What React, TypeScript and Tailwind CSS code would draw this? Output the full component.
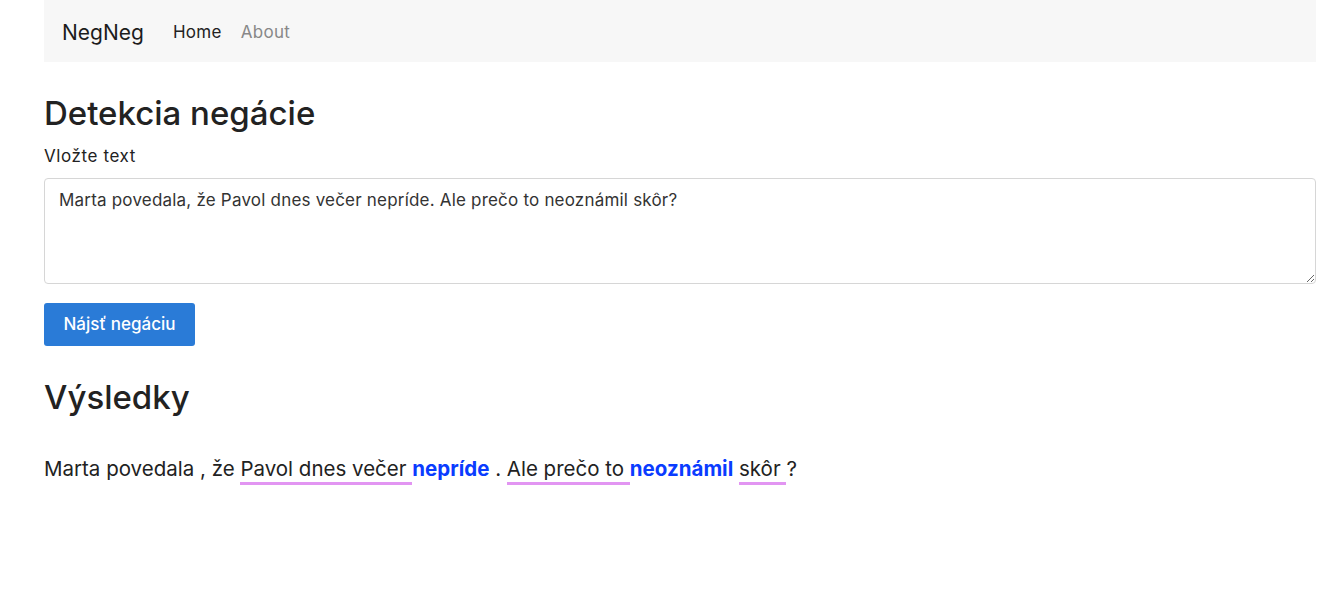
import React, { useState } from "react";

const Neg: React.FC<{ children: React.ReactNode }> = ({ children }) => (
  <span className="font-bold text-[#0a3cff]">{children}</span>
);

const Scope: React.FC<{ children: React.ReactNode }> = ({ children }) => (
  <span className="border-b-[3px] border-[#e295f2] pb-[1px]">{children}</span>
);

const App: React.FC = () => {
  const [text, setText] = useState(
    "Marta povedala, že Pavol dnes večer nepríde. Ale prečo to neoznámil skôr?"
  );

  return (
    <div className="min-h-[609px] bg-white pl-[44px] pr-[26px] font-['Inter','Liberation_Sans',Arial,sans-serif] text-[#212529]">
      <nav className="flex h-[62px] items-center bg-[#f7f7f7] px-[18px] pt-[4px]">
        <span className="mr-[29px] text-[21px] text-[#1c1c1c]">NegNeg</span>
        <div className="flex gap-[19px] text-[17px] tracking-[0.3px]">
          <a className="text-[#222]">Home</a>
          <a className="text-[#888]">About</a>
        </div>
      </nav>

      <h1 className="mt-[31px] text-[33px] leading-[40px] font-medium text-[#222]">
        Detekcia negácie
      </h1>
      <label className="mt-[13px] block text-[17px] leading-[20px] tracking-[0.6px] text-[#222]">
        Vložte text
      </label>
      <textarea
        value={text}
        onChange={(e) => setText(e.target.value)}
        className="mt-[12px] block h-[106px] w-full resize-y rounded-[4px] border border-[#d6d6d6] px-[14px] py-[9px] text-[17px] leading-[24px] tracking-[0.2px] text-[#333] outline-none"
      />
      <button
        type="button"
        className="mt-[19px] h-[43px] w-[151px] rounded-[3px] bg-[#2a7bd7] text-[17px] font-medium text-white"
      >
        Nájsť negáciu
      </button>

      <h2 className="mt-[31px] text-[33px] leading-[40px] font-medium text-[#222]">Výsledky</h2>

      <p className="mt-[38px] text-[20.5px] leading-[28px] text-[#222]">
        Marta povedala , že <Scope>Pavol dnes večer </Scope>
        <Neg>nepríde</Neg> . <Scope>Ale prečo to </Scope>
        <Neg>neoznámil</Neg> <Scope>skôr </Scope>?
      </p>
    </div>
  );
};

export default App;
